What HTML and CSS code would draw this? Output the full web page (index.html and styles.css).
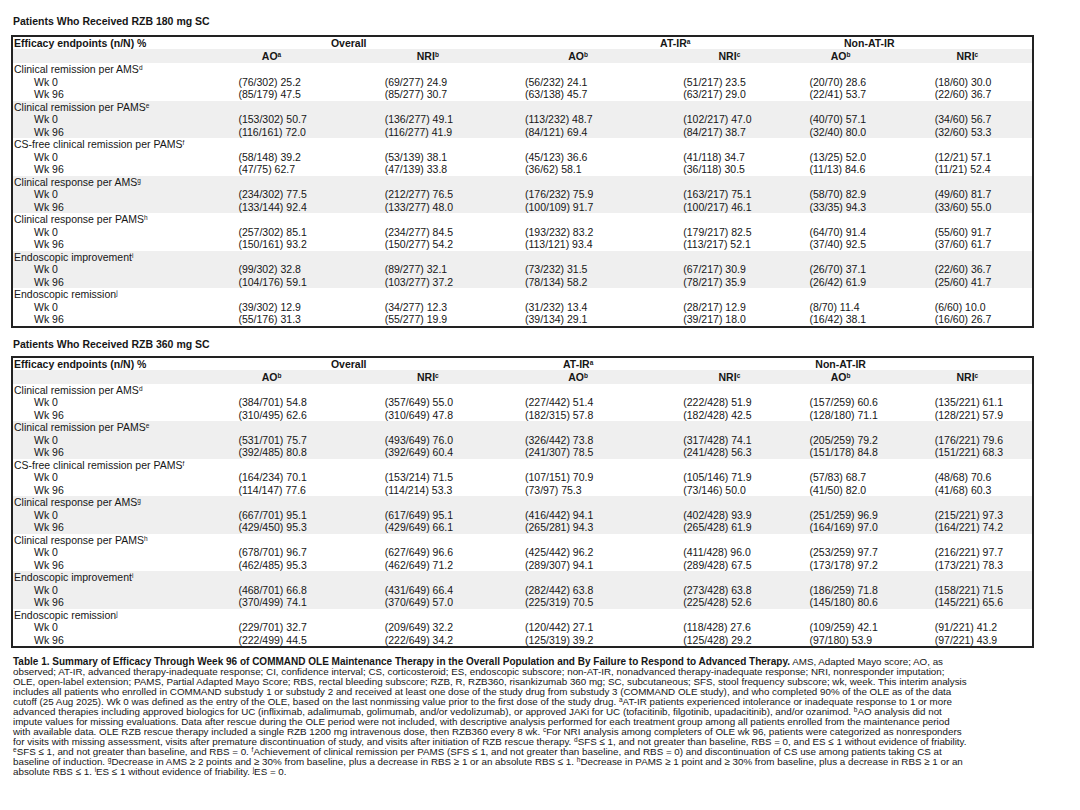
FILE: index.html
```html
<!DOCTYPE html>
<html lang="en">
<head>
<meta charset="utf-8">
<title>Table 1. Summary of Efficacy Through Week 96 of COMMAND OLE</title>
<link rel="stylesheet" href="styles.css">
</head>
<body>
<div class="page">
  <h2 class="title">Patients Who Received RZB 180 mg SC</h2>
  <table class="eff eff-180">
    <colgroup>
      <col class="c-lbl"><col class="c1"><col class="c2"><col class="c3"><col class="c4"><col class="c5"><col class="c6">
    </colgroup>
    <thead>
      <tr class="hdr">
        <th class="lbl">Efficacy endpoints (n/N) %</th>
        <th colspan="2" class="g-overall">Overall</th>
        <th colspan="2" class="g-atir-span">AT-IR<sup>a</sup></th>
        <th colspan="2" class="g-non-span">Non-AT-IR</th>
      </tr>
      <tr class="sub">
        <th></th>
        <th class="s1">AO<sup>a</sup></th><th class="s2">NRI<sup>b</sup></th>
        <th class="s3">AO<sup>b</sup></th><th class="s4">NRI<sup>c</sup></th>
        <th class="s5">AO<sup>b</sup></th><th class="s6">NRI<sup>c</sup></th>
      </tr>
    </thead>
    <tbody>
      <tr><td class="ep" colspan="7">Clinical remission per AMS<sup>d</sup></td></tr>
      <tr><td class="wk">Wk 0</td><td class="num">(76/302) 25.2</td><td class="num">(69/277) 24.9</td><td class="num">(56/232) 24.1</td><td class="num">(51/217) 23.5</td><td class="num">(20/70) 28.6</td><td class="num">(18/60) 30.0</td></tr>
      <tr><td class="wk">Wk 96</td><td class="num">(85/179) 47.5</td><td class="num">(85/277) 30.7</td><td class="num">(63/138) 45.7</td><td class="num">(63/217) 29.0</td><td class="num">(22/41) 53.7</td><td class="num">(22/60) 36.7</td></tr>
    </tbody>
    <tbody class="alt">
      <tr><td class="ep" colspan="7">Clinical remission per PAMS<sup>e</sup></td></tr>
      <tr><td class="wk">Wk 0</td><td class="num">(153/302) 50.7</td><td class="num">(136/277) 49.1</td><td class="num">(113/232) 48.7</td><td class="num">(102/217) 47.0</td><td class="num">(40/70) 57.1</td><td class="num">(34/60) 56.7</td></tr>
      <tr><td class="wk">Wk 96</td><td class="num">(116/161) 72.0</td><td class="num">(116/277) 41.9</td><td class="num">(84/121) 69.4</td><td class="num">(84/217) 38.7</td><td class="num">(32/40) 80.0</td><td class="num">(32/60) 53.3</td></tr>
    </tbody>
    <tbody>
      <tr><td class="ep" colspan="7">CS-free clinical remission per PAMS<sup>f</sup></td></tr>
      <tr><td class="wk">Wk 0</td><td class="num">(58/148) 39.2</td><td class="num">(53/139) 38.1</td><td class="num">(45/123) 36.6</td><td class="num">(41/118) 34.7</td><td class="num">(13/25) 52.0</td><td class="num">(12/21) 57.1</td></tr>
      <tr><td class="wk">Wk 96</td><td class="num">(47/75) 62.7</td><td class="num">(47/139) 33.8</td><td class="num">(36/62) 58.1</td><td class="num">(36/118) 30.5</td><td class="num">(11/13) 84.6</td><td class="num">(11/21) 52.4</td></tr>
    </tbody>
    <tbody class="alt">
      <tr><td class="ep" colspan="7">Clinical response per AMS<sup>g</sup></td></tr>
      <tr><td class="wk">Wk 0</td><td class="num">(234/302) 77.5</td><td class="num">(212/277) 76.5</td><td class="num">(176/232) 75.9</td><td class="num">(163/217) 75.1</td><td class="num">(58/70) 82.9</td><td class="num">(49/60) 81.7</td></tr>
      <tr><td class="wk">Wk 96</td><td class="num">(133/144) 92.4</td><td class="num">(133/277) 48.0</td><td class="num">(100/109) 91.7</td><td class="num">(100/217) 46.1</td><td class="num">(33/35) 94.3</td><td class="num">(33/60) 55.0</td></tr>
    </tbody>
    <tbody>
      <tr><td class="ep" colspan="7">Clinical response per PAMS<sup>h</sup></td></tr>
      <tr><td class="wk">Wk 0</td><td class="num">(257/302) 85.1</td><td class="num">(234/277) 84.5</td><td class="num">(193/232) 83.2</td><td class="num">(179/217) 82.5</td><td class="num">(64/70) 91.4</td><td class="num">(55/60) 91.7</td></tr>
      <tr><td class="wk">Wk 96</td><td class="num">(150/161) 93.2</td><td class="num">(150/277) 54.2</td><td class="num">(113/121) 93.4</td><td class="num">(113/217) 52.1</td><td class="num">(37/40) 92.5</td><td class="num">(37/60) 61.7</td></tr>
    </tbody>
    <tbody class="alt">
      <tr><td class="ep" colspan="7">Endoscopic improvement<sup>i</sup></td></tr>
      <tr><td class="wk">Wk 0</td><td class="num">(99/302) 32.8</td><td class="num">(89/277) 32.1</td><td class="num">(73/232) 31.5</td><td class="num">(67/217) 30.9</td><td class="num">(26/70) 37.1</td><td class="num">(22/60) 36.7</td></tr>
      <tr><td class="wk">Wk 96</td><td class="num">(104/176) 59.1</td><td class="num">(103/277) 37.2</td><td class="num">(78/134) 58.2</td><td class="num">(78/217) 35.9</td><td class="num">(26/42) 61.9</td><td class="num">(25/60) 41.7</td></tr>
    </tbody>
    <tbody>
      <tr><td class="ep" colspan="7">Endoscopic remission<sup>j</sup></td></tr>
      <tr><td class="wk">Wk 0</td><td class="num">(39/302) 12.9</td><td class="num">(34/277) 12.3</td><td class="num">(31/232) 13.4</td><td class="num">(28/217) 12.9</td><td class="num">(8/70) 11.4</td><td class="num">(6/60) 10.0</td></tr>
      <tr><td class="wk">Wk 96</td><td class="num">(55/176) 31.3</td><td class="num">(55/277) 19.9</td><td class="num">(39/134) 29.1</td><td class="num">(39/217) 18.0</td><td class="num">(16/42) 38.1</td><td class="num">(16/60) 26.7</td></tr>
    </tbody>
  </table>

  <h2 class="title title-next">Patients Who Received RZB 360 mg SC</h2>
  <table class="eff eff-360">
    <colgroup>
      <col class="c-lbl"><col class="c1"><col class="c2"><col class="c3"><col class="c4"><col class="c5"><col class="c6">
    </colgroup>
    <thead>
      <tr class="hdr">
        <th class="lbl">Efficacy endpoints (n/N) %</th>
        <th colspan="2" class="g-overall">Overall</th>
        <th class="s3">AT-IR<sup>a</sup></th><th></th>
        <th class="s5">Non-AT-IR</th><th></th>
      </tr>
      <tr class="sub">
        <th></th>
        <th class="s1">AO<sup>b</sup></th><th class="s2">NRI<sup>c</sup></th>
        <th class="s3">AO<sup>b</sup></th><th class="s4">NRI<sup>c</sup></th>
        <th class="s5">AO<sup>b</sup></th><th class="s6">NRI<sup>c</sup></th>
      </tr>
    </thead>
    <tbody>
      <tr><td class="ep" colspan="7">Clinical remission per AMS<sup>d</sup></td></tr>
      <tr><td class="wk">Wk 0</td><td class="num">(384/701) 54.8</td><td class="num">(357/649) 55.0</td><td class="num">(227/442) 51.4</td><td class="num">(222/428) 51.9</td><td class="num">(157/259) 60.6</td><td class="num">(135/221) 61.1</td></tr>
      <tr><td class="wk">Wk 96</td><td class="num">(310/495) 62.6</td><td class="num">(310/649) 47.8</td><td class="num">(182/315) 57.8</td><td class="num">(182/428) 42.5</td><td class="num">(128/180) 71.1</td><td class="num">(128/221) 57.9</td></tr>
    </tbody>
    <tbody class="alt">
      <tr><td class="ep" colspan="7">Clinical remission per PAMS<sup>e</sup></td></tr>
      <tr><td class="wk">Wk 0</td><td class="num">(531/701) 75.7</td><td class="num">(493/649) 76.0</td><td class="num">(326/442) 73.8</td><td class="num">(317/428) 74.1</td><td class="num">(205/259) 79.2</td><td class="num">(176/221) 79.6</td></tr>
      <tr><td class="wk">Wk 96</td><td class="num">(392/485) 80.8</td><td class="num">(392/649) 60.4</td><td class="num">(241/307) 78.5</td><td class="num">(241/428) 56.3</td><td class="num">(151/178) 84.8</td><td class="num">(151/221) 68.3</td></tr>
    </tbody>
    <tbody>
      <tr><td class="ep" colspan="7">CS-free clinical remission per PAMS<sup>f</sup></td></tr>
      <tr><td class="wk">Wk 0</td><td class="num">(164/234) 70.1</td><td class="num">(153/214) 71.5</td><td class="num">(107/151) 70.9</td><td class="num">(105/146) 71.9</td><td class="num">(57/83) 68.7</td><td class="num">(48/68) 70.6</td></tr>
      <tr><td class="wk">Wk 96</td><td class="num">(114/147) 77.6</td><td class="num">(114/214) 53.3</td><td class="num">(73/97) 75.3</td><td class="num">(73/146) 50.0</td><td class="num">(41/50) 82.0</td><td class="num">(41/68) 60.3</td></tr>
    </tbody>
    <tbody class="alt">
      <tr><td class="ep" colspan="7">Clinical response per AMS<sup>g</sup></td></tr>
      <tr><td class="wk">Wk 0</td><td class="num">(667/701) 95.1</td><td class="num">(617/649) 95.1</td><td class="num">(416/442) 94.1</td><td class="num">(402/428) 93.9</td><td class="num">(251/259) 96.9</td><td class="num">(215/221) 97.3</td></tr>
      <tr><td class="wk">Wk 96</td><td class="num">(429/450) 95.3</td><td class="num">(429/649) 66.1</td><td class="num">(265/281) 94.3</td><td class="num">(265/428) 61.9</td><td class="num">(164/169) 97.0</td><td class="num">(164/221) 74.2</td></tr>
    </tbody>
    <tbody>
      <tr><td class="ep" colspan="7">Clinical response per PAMS<sup>h</sup></td></tr>
      <tr><td class="wk">Wk 0</td><td class="num">(678/701) 96.7</td><td class="num">(627/649) 96.6</td><td class="num">(425/442) 96.2</td><td class="num">(411/428) 96.0</td><td class="num">(253/259) 97.7</td><td class="num">(216/221) 97.7</td></tr>
      <tr><td class="wk">Wk 96</td><td class="num">(462/485) 95.3</td><td class="num">(462/649) 71.2</td><td class="num">(289/307) 94.1</td><td class="num">(289/428) 67.5</td><td class="num">(173/178) 97.2</td><td class="num">(173/221) 78.3</td></tr>
    </tbody>
    <tbody class="alt">
      <tr><td class="ep" colspan="7">Endoscopic improvement<sup>i</sup></td></tr>
      <tr><td class="wk">Wk 0</td><td class="num">(468/701) 66.8</td><td class="num">(431/649) 66.4</td><td class="num">(282/442) 63.8</td><td class="num">(273/428) 63.8</td><td class="num">(186/259) 71.8</td><td class="num">(158/221) 71.5</td></tr>
      <tr><td class="wk">Wk 96</td><td class="num">(370/499) 74.1</td><td class="num">(370/649) 57.0</td><td class="num">(225/319) 70.5</td><td class="num">(225/428) 52.6</td><td class="num">(145/180) 80.6</td><td class="num">(145/221) 65.6</td></tr>
    </tbody>
    <tbody>
      <tr><td class="ep" colspan="7">Endoscopic remission<sup>j</sup></td></tr>
      <tr><td class="wk">Wk 0</td><td class="num">(229/701) 32.7</td><td class="num">(209/649) 32.2</td><td class="num">(120/442) 27.1</td><td class="num">(118/428) 27.6</td><td class="num">(109/259) 42.1</td><td class="num">(91/221) 41.2</td></tr>
      <tr><td class="wk">Wk 96</td><td class="num">(222/499) 44.5</td><td class="num">(222/649) 34.2</td><td class="num">(125/319) 39.2</td><td class="num">(125/428) 29.2</td><td class="num">(97/180) 53.9</td><td class="num">(97/221) 43.9</td></tr>
    </tbody>
  </table>

  <p class="caption"><strong>Table 1. Summary of Efficacy Through Week 96 of COMMAND OLE Maintenance Therapy in the Overall Population and By Failure to Respond to Advanced Therapy.</strong> AMS, Adapted Mayo score; AO, as<br>
  observed; AT-IR, advanced therapy-inadequate response; CI, confidence interval; CS, corticosteroid; ES, endoscopic subscore; non-AT-IR, nonadvanced therapy-inadequate response; NRI, nonresponder imputation;<br>
  OLE, open-label extension; PAMS, Partial Adapted Mayo Score; RBS, rectal bleeding subscore; RZB, R, RZB360, risankizumab 360 mg; SC, subcutaneous; SFS, stool frequency subscore; wk, week. This interim analysis<br>
  includes all patients who enrolled in COMMAND substudy 1 or substudy 2 and received at least one dose of the study drug from substudy 3 (COMMAND OLE study), and who completed 90% of the OLE as of the data<br>
  cutoff (25 Aug 2025). Wk 0 was defined as the entry of the OLE, based on the last nonmissing value prior to the first dose of the study drug. <sup>a</sup>AT-IR patients experienced intolerance or inadequate response to 1 or more<br>
  advanced therapies including approved biologics for UC (infliximab, adalimumab, golimumab, and/or vedolizumab), or approved JAKi for UC (tofacitinib, filgotinib, upadacitinib), and/or ozanimod. <sup>b</sup>AO analysis did not<br>
  impute values for missing evaluations. Data after rescue during the OLE period were not included, with descriptive analysis performed for each treatment group among all patients enrolled from the maintenance period<br>
  with available data. OLE RZB rescue therapy included a single RZB 1200 mg intravenous dose, then RZB360 every 8 wk. <sup>c</sup>For NRI analysis among completers of OLE wk 96, patients were categorized as nonresponders<br>
  for visits with missing assessment, visits after premature discontinuation of study, and visits after initiation of RZB rescue therapy. <sup>d</sup>SFS ≤ 1, and not greater than baseline, RBS = 0, and ES ≤ 1 without evidence of friability.<br>
  <sup>e</sup>SFS ≤ 1, and not greater than baseline, and RBS = 0. <sup>f</sup>Achievement of clinical remission per PAMS (SFS ≤ 1, and not greater than baseline, and RBS = 0) and discontinuation of CS use among patients taking CS at<br>
  baseline of induction. <sup>g</sup>Decrease in AMS ≥ 2 points and ≥ 30% from baseline, plus a decrease in RBS ≥ 1 or an absolute RBS ≤ 1. <sup>h</sup>Decrease in PAMS ≥ 1 point and ≥ 30% from baseline, plus a decrease in RBS ≥ 1 or an<br>
  absolute RBS ≤ 1. <sup>i</sup>ES ≤ 1 without evidence of friability. <sup>j</sup>ES = 0.</p>
</div>
</body>
</html>
```

FILE: styles.css
```css
html, body {
  margin: 0;
  padding: 0;
  background: #ffffff;
}

body {
  color: #161616;
  font-family: "Liberation Sans", Arial, Helvetica, sans-serif;
}

.page {
  width: 1023px;
  padding: 15px 0 0 11px;
}

.title {
  margin: 0 0 7px 2px;
  font-size: 10.5px;
  line-height: 13px;
  font-weight: bold;
}

.title-next {
  margin-top: 10px;
  margin-bottom: 5px;
}

.eff {
  width: 1023px;
  border-collapse: collapse;
  table-layout: fixed;
  border: 2px solid #222222;
  font-size: 10.5px;
}

/* column grid: data values start 4px into each column */
.c-lbl { width: 222px; }
.c1 { width: 146px; }
.c2 { width: 140px; }
.c3 { width: 158px; }
.c4 { width: 126px; }
.c5 { width: 125px; }
.c6 { width: 102px; }

.eff th,
.eff td {
  padding: 0;
  white-space: nowrap;
}

.eff .hdr th {
  height: 12px;
  line-height: 12px;
  font-weight: bold;
  text-align: center;
}

.eff .hdr th.lbl {
  text-align: left;
  padding-left: 1px;
}

.eff .sub th {
  height: 14px;
  line-height: 14px;
  font-weight: bold;
  text-align: center;
  background: #efefef;
}

/* heading centres: padding moves the centre of the heading in its column */
.eff th.s1 { padding-right: 72px; }
.eff th.s2 { padding-right: 46px; }
.eff th.s3 { padding-right: 44px; }
.eff th.s4 { padding-right: 26px; }
.eff th.s5 { padding-right: 55px; }
.eff th.s6 { padding-right: 28px; }

.eff th.g-overall { padding-right: 58px; }
.eff th.g-atir-span { padding-left: 24px; }
.eff th.g-non-span { padding-right: 99px; }

.eff tbody td {
  height: 12.5px;
  line-height: 12.5px;
}

.eff tbody.alt td {
  background: #efefef;
}

.eff td.ep {
  padding-left: 1px;
}

.eff td.wk {
  padding-left: 21px;
}

.eff td.num {
  text-align: left;
  padding-left: 4px;
}

sup {
  font-size: 6.5px;
  line-height: 0;
  vertical-align: 3.5px;
}

.caption {
  margin: 8.5px 0 0 2px;
  font-size: 9.8px;
  line-height: 10px;
  white-space: nowrap;
}

.caption strong {
  font-weight: bold;
  font-size: 10px;
}
```
